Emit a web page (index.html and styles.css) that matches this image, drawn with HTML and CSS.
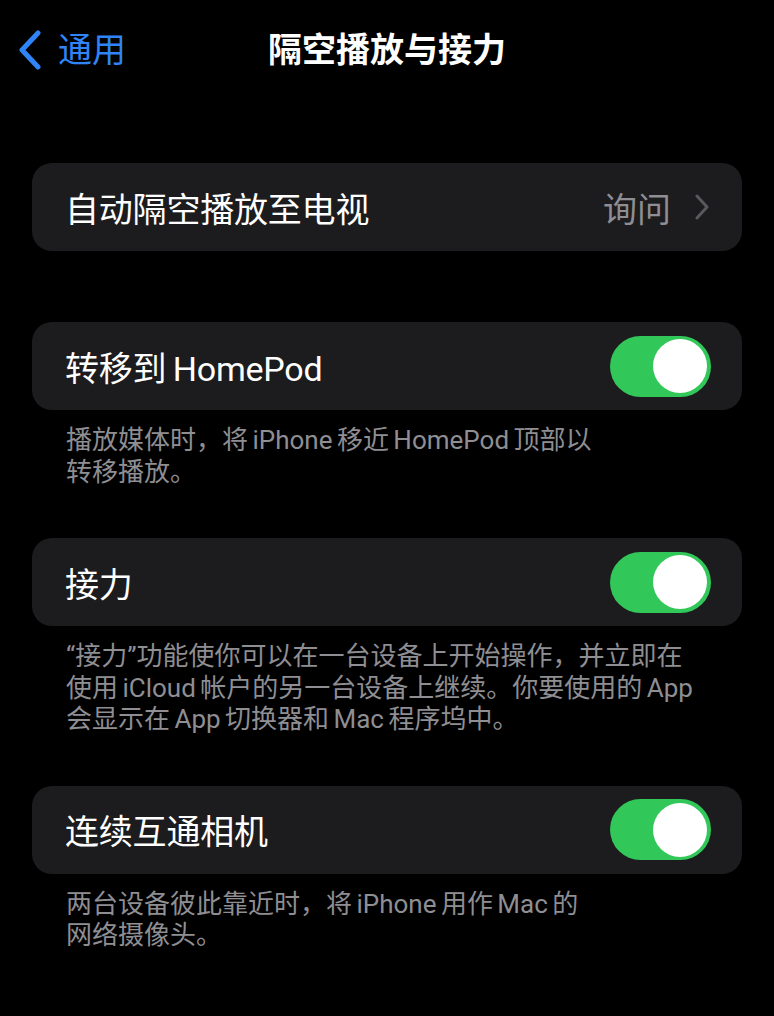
FILE: index.html
```html
<!DOCTYPE html>
<html lang="zh-CN">
<head>
    <meta charset="UTF-8">
    <meta name="viewport" content="width=device-width, initial-scale=1.0">
    <title>隔空播放与接力</title>
    <link rel="stylesheet" href="styles.css">
</head>
<body>
    <header class="nav">
        <a class="back" href="#">
            <svg class="back-icon" width="24" height="40" viewBox="0 0 24 40">
                <path d="M20 3 L4 20 L20 37" fill="none" stroke="currentColor" stroke-width="5" stroke-linecap="round" stroke-linejoin="round"/>
            </svg>
            <span>通用</span>
        </a>
        <h1 class="title">隔空播放与接力</h1>
        <div></div>
    </header>

    <main class="list">
        <section class="group first">
            <div class="row">
                <span class="label">自动隔空播放至电视</span>
                <span class="value">
                    询问
                    <svg class="chevron" width="14" height="26" viewBox="0 0 14 26">
                        <path d="M2 2 L12 13 L2 24" fill="none" stroke="currentColor" stroke-width="3" stroke-linecap="round" stroke-linejoin="round"/>
                    </svg>
                </span>
            </div>
        </section>

        <section class="group after-plain">
            <div class="row">
                <span class="label">转移到 HomePod</span>
                <span class="switch on"><span class="knob"></span></span>
            </div>
            <p class="note">播放媒体时，将 iPhone 移近 HomePod 顶部以<br>转移播放。</p>
        </section>

        <section class="group">
            <div class="row">
                <span class="label">接力</span>
                <span class="switch on"><span class="knob"></span></span>
            </div>
            <p class="note">“接力”功能使你可以在一台设备上开始操作，并立即在<br>使用 iCloud 帐户的另一台设备上继续。你要使用的 App<br>会显示在 App 切换器和 Mac 程序坞中。</p>
        </section>

        <section class="group">
            <div class="row">
                <span class="label">连续互通相机</span>
                <span class="switch on"><span class="knob"></span></span>
            </div>
            <p class="note">两台设备彼此靠近时，将 iPhone 用作 Mac 的<br>网络摄像头。</p>
        </section>
    </main>
</body>
</html>
```

FILE: styles.css
```css
body {
    margin: 0;
    background: #000;
    color: #fff;
    font-family: "Roboto", "Noto Sans CJK SC", sans-serif;
}

.nav {
    height: 100px;
    display: grid;
    grid-template-columns: 1fr auto 1fr;
    align-items: center;
    padding: 0 18px;
}

.back {
    display: flex;
    align-items: center;
    gap: 16px;
    color: #2f84f7;
    text-decoration: none;
    font-size: 34px;
    line-height: 1;
}

.title {
    margin: 0;
    font-size: 34px;
    font-weight: 600;
    line-height: 1;
}

.list {
    padding: 0 32px;
}

.group {
    margin-top: 50px;
}

.group.first {
    margin-top: 63px;
}

.group.after-plain {
    margin-top: 71px;
}

.row {
    height: 88px;
    display: flex;
    align-items: center;
    justify-content: space-between;
    padding: 0 31px 0 33px;
    background: #1c1c1e;
    border-radius: 20px;
}

.label {
    font-size: 34px;
    letter-spacing: -0.2px;
    word-spacing: -2px;
}

.value {
    display: flex;
    align-items: center;
    gap: 24px;
    font-size: 34px;
    color: #8e8e93;
    padding-right: 2px;
}

.chevron {
    color: #58585d;
}

.switch {
    width: 101px;
    height: 61px;
    border-radius: 31px;
    background: #3a3a3c;
    display: flex;
    align-items: center;
    padding: 0 4px;
    box-sizing: border-box;
}

.switch.on {
    background: #32c759;
    justify-content: flex-end;
}

.knob {
    width: 54px;
    height: 54px;
    border-radius: 50%;
    background: #fff;
}

.note {
    margin: 0;
    padding: 15px 20px 0 34px;
    font-size: 26px;
    line-height: 31.5px;
    color: #8e8e93;
    white-space: nowrap;
    word-spacing: -2px;
}
```
